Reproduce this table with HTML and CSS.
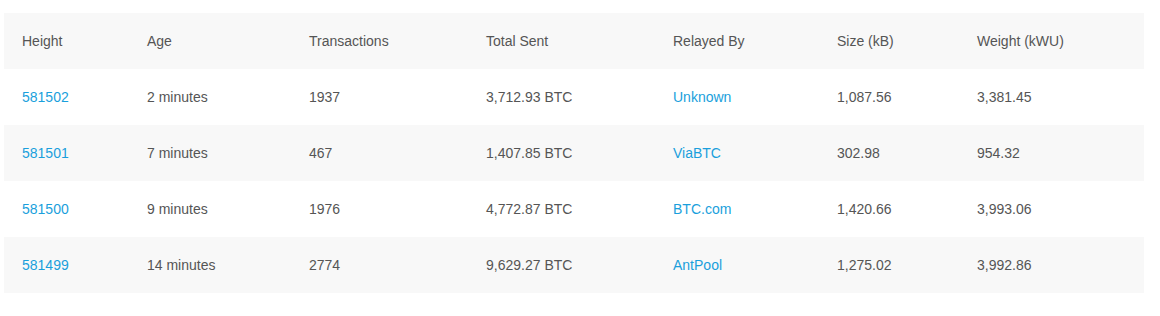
FILE: index.html
```html
<!DOCTYPE html>
<html lang="en">
  <head>
    <meta charset="UTF-8" />
    <meta name="viewport" content="width=device-width, initial-scale=1.0" />
    <title>Latest Blocks</title>
    <link rel="stylesheet" href="styles.css">
  </head>
  <body>
    <table class="blocks">
      <thead>
        <tr>
          <th class="col-height">Height</th>
          <th class="col-age">Age</th>
          <th class="col-tx">Transactions</th>
          <th class="col-sent">Total Sent</th>
          <th class="col-relay">Relayed By</th>
          <th class="col-size">Size (kB)</th>
          <th class="col-weight">Weight (kWU)</th>
        </tr>
      </thead>
      <tbody>
        <tr>
          <td><a href="#">581502</a></td>
          <td>2 minutes</td>
          <td>1937</td>
          <td>3,712.93 BTC</td>
          <td><a href="#">Unknown</a></td>
          <td>1,087.56</td>
          <td>3,381.45</td>
        </tr>
        <tr>
          <td><a href="#">581501</a></td>
          <td>7 minutes</td>
          <td>467</td>
          <td>1,407.85 BTC</td>
          <td><a href="#">ViaBTC</a></td>
          <td>302.98</td>
          <td>954.32</td>
        </tr>
        <tr>
          <td><a href="#">581500</a></td>
          <td>9 minutes</td>
          <td>1976</td>
          <td>4,772.87 BTC</td>
          <td><a href="#">BTC.com</a></td>
          <td>1,420.66</td>
          <td>3,993.06</td>
        </tr>
        <tr>
          <td><a href="#">581499</a></td>
          <td>14 minutes</td>
          <td>2774</td>
          <td>9,629.27 BTC</td>
          <td><a href="#">AntPool</a></td>
          <td>1,275.02</td>
          <td>3,992.86</td>
        </tr>
      </tbody>
    </table>
  </body>
</html>
```

FILE: styles.css
```css
* {
  margin: 0;
  padding: 0;
  box-sizing: border-box;
  font-family: "Liberation Sans", Arial, sans-serif;
}
body {
  background-color: white;
  padding: 13px 16px 0 4px;
}
.blocks {
  width: 1140px;
  border-collapse: collapse;
  table-layout: fixed;
  font-size: 14px;
  color: #555;
}
.blocks th,
.blocks td {
  height: 56px;
  padding: 0 0 0 18px;
  text-align: left;
  vertical-align: middle;
  font-weight: normal;
  white-space: nowrap;
}
.blocks thead tr {
  background-color: #f8f8f8;
}
.blocks tbody tr:nth-child(even) {
  background-color: #f8f8f8;
}
.col-height { width: 125px; }
.col-age { width: 162px; }
.col-tx { width: 177px; }
.col-sent { width: 187px; }
.col-relay { width: 164px; }
.col-size { width: 140px; }
.col-weight { width: 185px; }
.blocks a {
  color: #1a9fdc;
  text-decoration: none;
}
```
